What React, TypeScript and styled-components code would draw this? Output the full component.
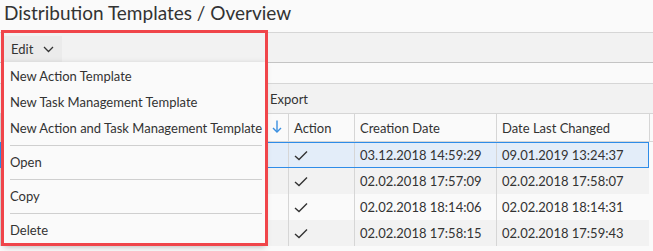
import React from 'react';
import styled, { createGlobalStyle } from 'styled-components';

const GlobalStyle = createGlobalStyle`
  html, body {
    margin: 0;
    padding: 0;
    background: #fafafa;
    font-family: Lato, "Open Sans", sans-serif;
    color: #333;
  }
`;

const Page = styled.div`
  width: 653px;
  height: 251px;
  overflow: hidden;
  position: relative;
`;

const Title = styled.h1`
  margin: 0;
  height: 33px;
  padding-left: 4px;
  font-size: 19px;
  font-weight: 400;
  line-height: 26px;
  color: #333;
  border-bottom: 1px solid #d6d6d6;
  box-sizing: border-box;
`;

const Toolbar = styled.div`
  height: 30px;
  background: #f2f2f2;
  border-bottom: 1px solid #c4c4c4;
  display: flex;
  align-items: stretch;
  padding-left: 4px;
  box-sizing: border-box;
`;

const Strip = styled.div`
  height: 21px;
  border-bottom: 1px solid #d6d6d6;
  box-sizing: border-box;
`;

const ActionBar = styled.div`
  height: 29px;
  background: #f2f2f2;
  display: flex;
  align-items: center;
  padding-left: 270px;
  font-size: 13px;
  box-sizing: border-box;
`;

const MenuWrap = styled.div`
  position: relative;
  display: flex;
`;

const EditButton = styled.button`
  border: 0;
  background: #ebebeb;
  width: 58px;
  margin-top: 3px;
  padding: 0 0 0 7px;
  display: flex;
  align-items: center;
  gap: 10px;
  font: inherit;
  font-size: 13px;
  color: #333;
`;

const Dropdown = styled.div`
  position: absolute;
  top: 100%;
  left: 0;
  width: 261px;
  height: 183px;
  background: #fafafa;
  box-shadow: 0 2px 6px rgba(0, 0, 0, 0.25);
  display: flex;
  flex-direction: column;
  padding: 1px 3px 0 6px;
  box-sizing: border-box;
  z-index: 5;
`;

const MenuItem = styled.div`
  height: 26px;
  display: flex;
  align-items: center;
  font-size: 13px;
  white-space: nowrap;
  color: #333;
`;

const Separator = styled.div`
  height: 1px;
  background: #cfcfcf;
  margin: 4px 0 3px;
`;

const Highlight = styled.div`
  position: absolute;
  top: -3px;
  left: -3px;
  width: 267px;
  height: 216px;
  border: 3px solid #f0454a;
  box-sizing: border-box;
  pointer-events: none;
  z-index: 6;
`;

const Table = styled.div`
  display: grid;
  grid-template-columns: 288px 66px 142px 153px 4px;
  font-size: 13px;
`;

const HeadCell = styled.div<{ $last?: boolean }>`
  height: 29px;
  display: flex;
  align-items: center;
  padding-left: 5px;
  border-top: 1px solid #d6d6d6;
  border-left: 1px solid #d6d6d6;
  border-bottom: 1px solid #d6d6d6;
  background: #fafafa;
  box-sizing: border-box;
  justify-content: ${p => (p.$last ? 'flex-end' : 'flex-start')};
`;

const Row = styled.div<{ $alt?: boolean; $selected?: boolean }>`
  grid-column: 1 / 5;
  display: grid;
  grid-template-columns: 288px 66px 142px 153px;
  height: 26px;
  box-sizing: border-box;
  background: ${p => (p.$selected ? '#e3edf9' : p.$alt ? '#f2f2f2' : '#fafafa')};
  outline: ${p => (p.$selected ? '1px solid #2e8ce8' : 'none')};
  outline-offset: -1px;
`;

const Cell = styled.div`
  display: flex;
  align-items: center;
  padding-left: 5px;
  border-left: 1px solid #d6d6d6;
  white-space: nowrap;
  color: #333;
`;

const Filler = styled.div`
  grid-column: 5;
`;

const Chevron = () => (
  <svg width="11" height="7" viewBox="0 0 11 7" fill="none">
    <polyline points="1,1 5.5,5.5 10,1" stroke="#333" strokeWidth="1.3" />
  </svg>
);

const Check = () => (
  <svg width="14" height="11" viewBox="0 0 14 11" fill="none">
    <polyline points="1,6 5,9.5 13,1.5" stroke="#333" strokeWidth="1.4" />
  </svg>
);

const SortArrow = () => (
  <svg width="10" height="13" viewBox="0 0 10 13" fill="none">
    <line x1="5" y1="0.5" x2="5" y2="12" stroke="#3a8fe0" strokeWidth="1.4" />
    <polyline points="1,8 5,12 9,8" stroke="#3a8fe0" strokeWidth="1.4" />
  </svg>
);

const rows = [
  { created: '03.12.2018 14:59:29', changed: '09.01.2019 13:24:37' },
  { created: '02.02.2018 17:57:09', changed: '02.02.2018 17:58:07' },
  { created: '02.02.2018 18:14:06', changed: '02.02.2018 18:14:31' },
  { created: '02.02.2018 17:58:15', changed: '02.02.2018 17:59:43' },
];

export default function App() {
  return (
    <Page>
      <GlobalStyle />
      <Title>Distribution Templates / Overview</Title>
      <Toolbar>
        <MenuWrap>
          <EditButton>
            Edit <Chevron />
          </EditButton>
          <Dropdown>
            <MenuItem>New Action Template</MenuItem>
            <MenuItem>New Task Management Template</MenuItem>
            <MenuItem>New Action and Task Management Template</MenuItem>
            <Separator />
            <MenuItem>Open</MenuItem>
            <Separator />
            <MenuItem>Copy</MenuItem>
            <Separator />
            <MenuItem>Delete</MenuItem>
          </Dropdown>
          <Highlight />
        </MenuWrap>
      </Toolbar>
      <Strip />
      <ActionBar>Export</ActionBar>
      <Table>
        <HeadCell $last>
          <span style={{ marginRight: 6 }}>
            <SortArrow />
          </span>
        </HeadCell>
        <HeadCell>Action</HeadCell>
        <HeadCell>Creation Date</HeadCell>
        <HeadCell>Date Last Changed</HeadCell>
        <HeadCell />
        {rows.map((r, i) => (
          <React.Fragment key={i}>
            <Row $selected={i === 0} $alt={i % 2 === 1}>
              <Cell />
              <Cell>
                <Check />
              </Cell>
              <Cell>{r.created}</Cell>
              <Cell>{r.changed}</Cell>
            </Row>
            <Filler />
          </React.Fragment>
        ))}
      </Table>
    </Page>
  );
}
